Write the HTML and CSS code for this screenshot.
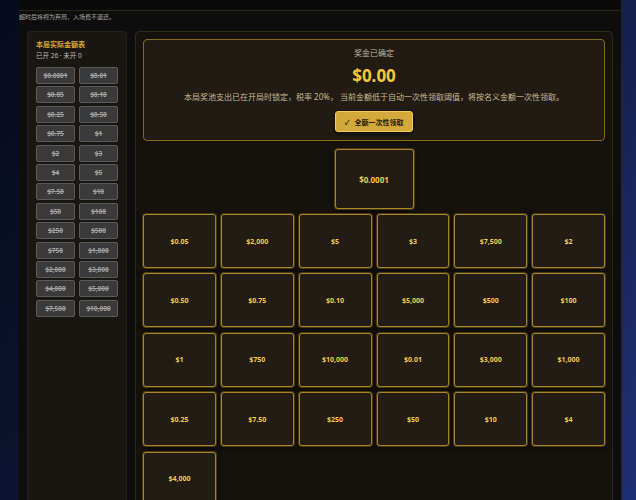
FILE: index.html
```html
<!DOCTYPE html>
<html lang="zh-CN">
<head>
    <meta charset="UTF-8">
    <meta name="viewport" content="width=device-width, initial-scale=1.0">
    <title>奖金已确定</title>
    <link rel="stylesheet" href="styles.css">
</head>
<body>
    <div class="page">
        <div class="topbar"></div>
        <p class="notice">超时后将视为弃局，入场费不退还。</p>

        <div class="layout">
            <aside class="side">
                <h2 class="side-title">本局实际金额表</h2>
                <p class="side-sub">已开 26 · 未开 0</p>
                <div class="chips">
                    <span class="chip">$0.0001</span><span class="chip">$0.01</span>
                    <span class="chip">$0.05</span><span class="chip">$0.10</span>
                    <span class="chip">$0.25</span><span class="chip">$0.50</span>
                    <span class="chip">$0.75</span><span class="chip">$1</span>
                    <span class="chip">$2</span><span class="chip">$3</span>
                    <span class="chip">$4</span><span class="chip">$5</span>
                    <span class="chip">$7.50</span><span class="chip">$10</span>
                    <span class="chip">$50</span><span class="chip">$100</span>
                    <span class="chip">$250</span><span class="chip">$500</span>
                    <span class="chip">$750</span><span class="chip">$1,000</span>
                    <span class="chip">$2,000</span><span class="chip">$3,000</span>
                    <span class="chip">$4,000</span><span class="chip">$5,000</span>
                    <span class="chip">$7,500</span><span class="chip">$10,000</span>
                </div>
            </aside>

            <main class="board">
                <section class="prize">
                    <p class="prize-label">奖金已确定</p>
                    <p class="prize-amount">$0.00</p>
                    <p class="prize-desc">本局奖池支出已在开局时锁定，税率 20%， 当前金额低于自动一次性领取阈值，将按名义金额一次性领取。</p>
                    <button class="claim"><span class="tick">✓</span>全额一次性领取</button>
                </section>

                <div class="mine">
                    <div class="case case-big">$0.0001</div>
                </div>

                <div class="cases">
                    <div class="case">$0.05</div>
                    <div class="case">$2,000</div>
                    <div class="case">$5</div>
                    <div class="case">$3</div>
                    <div class="case">$7,500</div>
                    <div class="case">$2</div>
                    <div class="case">$0.50</div>
                    <div class="case">$0.75</div>
                    <div class="case">$0.10</div>
                    <div class="case">$5,000</div>
                    <div class="case">$500</div>
                    <div class="case">$100</div>
                    <div class="case">$1</div>
                    <div class="case">$750</div>
                    <div class="case">$10,000</div>
                    <div class="case">$0.01</div>
                    <div class="case">$3,000</div>
                    <div class="case">$1,000</div>
                    <div class="case">$0.25</div>
                    <div class="case">$7.50</div>
                    <div class="case">$250</div>
                    <div class="case">$50</div>
                    <div class="case">$10</div>
                    <div class="case">$4</div>
                    <div class="case">$4,000</div>
                </div>
            </main>
        </div>
    </div>
</body>
</html>
```

FILE: styles.css
```css
body {
    margin: 0;
    height: 100vh;
    overflow: hidden;
    font-family: "Noto Sans", "Noto Sans CJK SC", sans-serif;
    background: linear-gradient(120deg, #060a1c 0%, #0d1738 50%, #1d3072 100%);
}
.page {
    margin-left: 19px;
    width: 602px;
    height: 100vh;
    overflow: hidden;
    background: #0d0d0d;
    border-right: 1px solid #262626;
}
.topbar {
    height: 10px;
    background: #0a0a0a;
    border-bottom: 1px solid #2a2414;
}
.notice {
    margin: 0;
    padding-top: 2px;
    font-size: 6px;
    line-height: 8px;
    color: #a8a8a8;
}
.layout {
    display: flex;
    gap: 8px;
    padding: 10px 8px 0;
}
.side {
    width: 82px;
    padding: 8px;
    min-height: 480px;
    background: #1a1712;
    border: 1px solid #272218;
    border-radius: 4px;
}
.side-title {
    margin: 0;
    font-size: 7px;
    line-height: 9px;
    font-weight: bold;
    color: #d6a73a;
}
.side-sub {
    margin: 3px 0 0;
    font-size: 6.5px;
    line-height: 8px;
    color: #b8b8b8;
}
.chips {
    display: grid;
    grid-template-columns: 1fr 1fr;
    gap: 2.4px 4px;
    margin-top: 7px;
}
.chip {
    height: 15px;
    line-height: 15px;
    text-align: center;
    font-size: 6.5px;
    font-weight: bold;
    color: #a0a0a0;
    text-decoration: line-through;
    background: #3a3a3a;
    border: 1px solid #5a5a5a;
    border-radius: 2px;
}
.board {
    flex: 1;
    padding: 7px;
    min-height: 480px;
    background: #15120d;
    border: 1px solid #2f2818;
    border-radius: 4px;
}
.prize {
    padding: 8px 10px;
    text-align: center;
    background: #211b14;
    border: 1px solid #86681f;
    border-radius: 4px;
}
.prize p {
    margin: 0;
}
.prize-label {
    font-size: 8px;
    line-height: 10px;
    color: #bbb3a3;
}
.prize-amount {
    margin-top: 8px !important;
    font-size: 17px;
    line-height: 20px;
    font-weight: bold;
    color: #f4c63c;
}
.prize-desc {
    margin-top: 6px !important;
    font-size: 8px;
    line-height: 10px;
    color: #c9b88e;
    white-space: nowrap;
}
.claim {
    margin-top: 9px;
    width: 78px;
    height: 21px;
    padding: 0;
    font-family: inherit;
    font-size: 7px;
    font-weight: bold;
    color: #2a1f08;
    background: #d4a93c;
    border: 1px solid #f0cc60;
    border-radius: 3px;
    box-shadow: 0 0 0 1px #1a1408, 0 2px 4px rgba(0, 0, 0, 0.6);
}
.tick {
    margin-right: 5px;
    font-size: 7px;
}
.mine {
    display: flex;
    justify-content: center;
    margin-top: 8px;
}
.cases {
    display: grid;
    grid-template-columns: repeat(6, 1fr);
    gap: 5.4px 5px;
    margin-top: 5px;
}
.case {
    height: 52px;
    display: flex;
    align-items: center;
    justify-content: center;
    font-size: 7px;
    font-weight: bold;
    color: #f2c94a;
    background: #221c15;
    border: 1px solid #a7852c;
    border-radius: 3px;
    box-shadow: 0 0 0 1px #4a3a12, 0 3px 6px rgba(0, 0, 0, 0.55);
}
.case-big {
    width: 77px;
    height: 58px;
    font-size: 8px;
}
```
